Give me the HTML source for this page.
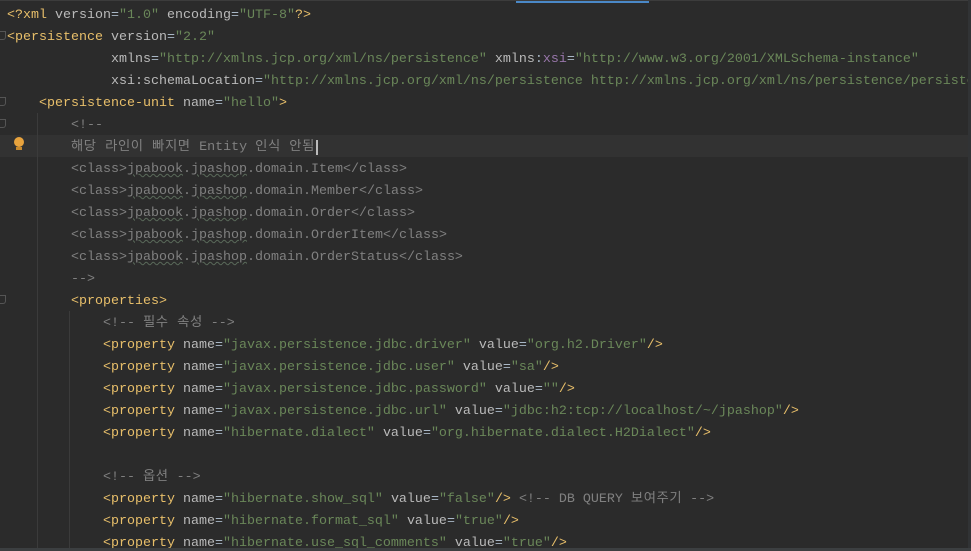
<!DOCTYPE html>
<html><head><meta charset="utf-8"><style>
body{margin:0;width:971px;height:551px;overflow:hidden;background:#2b2b2b;position:relative;font-family:"Liberation Mono","Noto Sans CJK KR",monospace;font-size:13.33px;}
#wrap{position:absolute;left:0;top:0;width:968px;height:548px;overflow:hidden}
.l{position:absolute;left:7px;height:22px;line-height:22px;white-space:pre;color:#a9b7c6}
.t{color:#e8bf6a}.a{color:#bababa}.v{color:#6a8759}.c{color:#808080}.ns{color:#9876aa}
.k{letter-spacing:0.55px}
.w{text-decoration:underline wavy #5a6a5a;text-decoration-thickness:1px}
.g{position:absolute;width:1px;background:#3b3b3b}
.f{position:absolute;left:0;width:5px;height:7px;border:1px solid #555;border-left:none;border-radius:0 0 3px 0}
</style></head><body>
<div id="wrap">
<div style="position:absolute;left:0;top:135px;width:968px;height:22px;background:#323232"></div>
<div style="position:absolute;left:516px;top:0;width:133px;height:3px;background:#4a88c7"></div>
<div style="position:absolute;left:0;top:0;width:971px;height:1px;background:#3c3c3c"></div>
<div class="g" style="left:37px;top:113px;height:435px"></div>
<div class="g" style="left:69px;top:311px;height:237px"></div>
<div class="f" style="top:31px"></div>
<div class="f" style="top:97px"></div>
<div class="f" style="top:119px"></div>
<div class="f" style="top:295px"></div>
<div style="position:absolute;left:14px;top:137px;width:10px;height:10px;border-radius:50%;background:#e8a33d"></div>
<div style="position:absolute;left:16px;top:147px;width:6px;height:3px;background:#c88a2d"></div>
<div class="l" style="top:5px"><span class="t">&lt;?xml </span><span class="a">version</span>=<span class="v">"1.0"</span> <span class="a">encoding</span>=<span class="v">"UTF-8"</span><span class="t">?&gt;</span></div>
<div class="l" style="top:27px"><span class="t">&lt;persistence </span><span class="a">version</span>=<span class="v">"2.2"</span></div>
<div class="l" style="top:49px">             <span class="a">xmlns</span>=<span class="v">"http://xmlns.jcp.org/xml/ns/persistence"</span> <span class="a">xmlns</span>:<span class="ns">xsi</span>=<span class="v">"http://www.w3.org/2001/XMLSchema-instance"</span></div>
<div class="l" style="top:71px">             <span class="a">xsi:schemaLocation</span>=<span class="v">"http://xmlns.jcp.org/xml/ns/persistence http://xmlns.jcp.org/xml/ns/persistence/persistence_2_2.xsd"</span></div>
<div class="l" style="top:93px">    <span class="t">&lt;persistence-unit </span><span class="a">name</span>=<span class="v">"hello"</span><span class="t">&gt;</span></div>
<div class="l c" style="top:115px">        &lt;!--</div>
<div class="l c" style="top:137px">        <span class="k">해당 라인이 빠지면 </span>Entity <span class="k">인식 안됨</span><span style="border-left:2px solid #bbb;margin-left:1px"></span></div>
<div class="l c" style="top:159px">        &lt;class&gt;<span class="w">jpabook</span>.<span class="w">jpashop</span>.domain.Item&lt;/class&gt;</div>
<div class="l c" style="top:181px">        &lt;class&gt;<span class="w">jpabook</span>.<span class="w">jpashop</span>.domain.Member&lt;/class&gt;</div>
<div class="l c" style="top:203px">        &lt;class&gt;<span class="w">jpabook</span>.<span class="w">jpashop</span>.domain.Order&lt;/class&gt;</div>
<div class="l c" style="top:225px">        &lt;class&gt;<span class="w">jpabook</span>.<span class="w">jpashop</span>.domain.OrderItem&lt;/class&gt;</div>
<div class="l c" style="top:247px">        &lt;class&gt;<span class="w">jpabook</span>.<span class="w">jpashop</span>.domain.OrderStatus&lt;/class&gt;</div>
<div class="l c" style="top:269px">        --&gt;</div>
<div class="l" style="top:291px">        <span class="t">&lt;properties&gt;</span></div>
<div class="l c" style="top:313px">            &lt;!-- <span class="k">필수 속성</span> --&gt;</div>
<div class="l" style="top:335px">            <span class="t">&lt;property </span><span class="a">name</span>=<span class="v">"javax.persistence.jdbc.driver"</span> <span class="a">value</span>=<span class="v">"org.h2.Driver"</span><span class="t">/&gt;</span></div>
<div class="l" style="top:357px">            <span class="t">&lt;property </span><span class="a">name</span>=<span class="v">"javax.persistence.jdbc.user"</span> <span class="a">value</span>=<span class="v">"sa"</span><span class="t">/&gt;</span></div>
<div class="l" style="top:379px">            <span class="t">&lt;property </span><span class="a">name</span>=<span class="v">"javax.persistence.jdbc.password"</span> <span class="a">value</span>=<span class="v">""</span><span class="t">/&gt;</span></div>
<div class="l" style="top:401px">            <span class="t">&lt;property </span><span class="a">name</span>=<span class="v">"javax.persistence.jdbc.url"</span> <span class="a">value</span>=<span class="v">"jdbc:h2:tcp://localhost/~/jpashop"</span><span class="t">/&gt;</span></div>
<div class="l" style="top:423px">            <span class="t">&lt;property </span><span class="a">name</span>=<span class="v">"hibernate.dialect"</span> <span class="a">value</span>=<span class="v">"org.hibernate.dialect.H2Dialect"</span><span class="t">/&gt;</span></div>
<div class="l c" style="top:467px">            &lt;!-- <span class="k">옵션</span> --&gt;</div>
<div class="l" style="top:489px">            <span class="t">&lt;property </span><span class="a">name</span>=<span class="v">"hibernate.show_sql"</span> <span class="a">value</span>=<span class="v">"false"</span><span class="t">/&gt;</span> <span class="c">&lt;!-- DB QUERY <span class="k">보여주기</span> --&gt;</span></div>
<div class="l" style="top:511px">            <span class="t">&lt;property </span><span class="a">name</span>=<span class="v">"hibernate.format_sql"</span> <span class="a">value</span>=<span class="v">"true"</span><span class="t">/&gt;</span></div>
<div class="l" style="top:533px">            <span class="t">&lt;property </span><span class="a">name</span>=<span class="v">"hibernate.use_sql_comments"</span> <span class="a">value</span>=<span class="v">"true"</span><span class="t">/&gt;</span></div>
</div>
<div style="position:absolute;left:968px;top:0;width:3px;height:551px;background:#313335"></div>
<div style="position:absolute;left:0;top:548px;width:971px;height:3px;background:#3c3f41"></div>
</body></html>
